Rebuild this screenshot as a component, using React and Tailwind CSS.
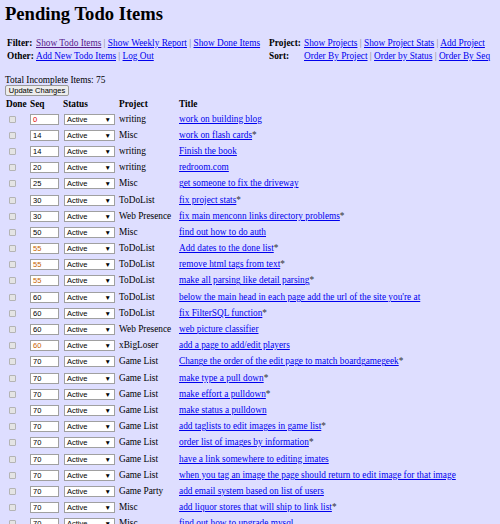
import React from "react";

const items = [
  ["0", "writing", "work on building blog", false, "red"],
  ["14", "Misc", "work on flash cards", true],
  ["14", "writing", "Finish the book", false],
  ["20", "writing", "redroom.com", false],
  ["25", "Misc", "get someone to fix the driveway", false],
  ["30", "ToDoList", "fix project stats", true],
  ["30", "Web Presence", "fix main menconn links directory problems", true],
  ["50", "Misc", "find out how to do auth", false],
  ["55", "ToDoList", "Add dates to the done list", true, "orange"],
  ["55", "ToDoList", "remove html tags from text", true, "orange"],
  ["55", "ToDoList", "make all parsing like detail parsing", true, "orange"],
  ["60", "ToDoList", "below the main head in each page add the url of the site you're at", false],
  ["60", "ToDoList", "fix FilterSQL function", true],
  ["60", "Web Presence", "web picture classifier", false],
  ["60", "xBigLoser", "add a page to add/edit players", false, "orange"],
  ["70", "Game List", "Change the order of the edit page to match boardgamegeek", true],
  ["70", "Game List", "make type a pull down", true],
  ["70", "Game List", "make effort a pulldown", true],
  ["70", "Game List", "make status a pulldown", false],
  ["70", "Game List", "add taglists to edit images in game list", true],
  ["70", "Game List", "order list of images by information", true],
  ["70", "Game List", "have a link somewhere to editing imates", false],
  ["70", "Game List", "when you tag an image the page should return to edit image for that image", false],
  ["70", "Game Party", "add email system based on list of users", false],
  ["70", "Misc", "add liquor stores that will ship to link list", true],
  ["70", "Misc", "find out how to upgrade mysql", false],
];

function Links({ links }) {
  return (
    <div className="whitespace-nowrap">
      {links.map((l, i) => (
        <React.Fragment key={l.text}>
          {i > 0 && <span className="text-[#777]"> | </span>}
          <a href="#" className={l.visited ? "text-[#551a8b] underline" : "text-[#0000ee] underline"}>
            {l.text}
          </a>
        </React.Fragment>
      ))}
    </div>
  );
}

function SeqInput({ value, tone }) {
  const color = tone === "red" ? "text-[#e00000]" : tone === "orange" ? "text-[#c86400]" : "text-black";
  return (
    <div className={`flex h-[11px] w-[29px] items-center border border-[#a0a0a0] bg-white pl-[2px] font-['Liberation_Sans',Arial,sans-serif] text-[7.5px] leading-[9px] ${color}`}>
      {value}
    </div>
  );
}

function StatusSelect() {
  return (
    <div className="flex h-[11px] w-[51px] items-center justify-between border border-[#a0a0a0] bg-white pl-[2px] pr-[3px] font-['Liberation_Sans',Arial,sans-serif] text-[7.5px] leading-[9px] text-black">
      <span>Active</span>
      <span className="text-[6.5px]">▼</span>
    </div>
  );
}

export default function App() {
  return (
    <div className="h-[524px] overflow-hidden bg-[#dedeff] font-['Liberation_Serif','Times_New_Roman',serif] text-[9.3px] leading-[13px] text-black">
      <h1 className="pl-[5px] pt-[4px] text-[18.6px] font-bold leading-[20px]">Pending Todo Items</h1>

      <div className="mt-[13px] grid grid-cols-[29px_233px_35px_auto] pl-[7px] leading-[13px]">
        <b>Filter:</b>
        <Links
          links={[
            { text: "Show Todo Items", visited: true },
            { text: "Show Weekly Report" },
            { text: "Show Done Items" },
          ]}
        />
        <b>Project:</b>
        <Links links={[{ text: "Show Projects" }, { text: "Show Project Stats" }, { text: "Add Project" }]} />
        <b>Other:</b>
        <Links links={[{ text: "Add New Todo Items" }, { text: "Log Out" }]} />
        <b>Sort:</b>
        <Links links={[{ text: "Order By Project" }, { text: "Order by Status" }, { text: "Order By Seq" }]} />
      </div>

      <p className="mt-[11.5px] pl-[5px] leading-[10px]">Total Incomplete Items: 75</p>
      <button className="ml-[5px] mt-[0.5px] flex h-[11px] w-[64px] items-center justify-center rounded-[2px] border border-[#9a9a9a] bg-[#ececec] font-['Liberation_Sans',Arial,sans-serif] text-[7.5px] leading-[9px] text-black">
        Update Changes
      </button>

      <div className="mt-[1px] flex h-[14px] items-center font-bold">
        <div className="w-[30px] pl-[6px]">Done</div>
        <div className="w-[33px]">Seq</div>
        <div className="w-[56px]">Status</div>
        <div className="w-[60px]">Project</div>
        <div>Title</div>
      </div>

      {items.map(([seq, project, title, star, tone], i) => (
        <div key={i} className="flex h-[16.2px] items-center">
          <div className="w-[30px] pl-[9px]">
            <span className="block h-[7px] w-[7px] rounded-[1px] border border-[#b4b4b4] bg-[#e4e4e4]" />
          </div>
          <div className="w-[34px]">
            <SeqInput value={seq} tone={tone} />
          </div>
          <div className="w-[55px]">
            <StatusSelect />
          </div>
          <div className="w-[60px] whitespace-nowrap">{project}</div>
          <div className="whitespace-nowrap">
            <a href="#" className="text-[#0000ee] underline">
              {title}
            </a>
            {star && <span className="text-[#333]">*</span>}
          </div>
        </div>
      ))}
    </div>
  );
}
